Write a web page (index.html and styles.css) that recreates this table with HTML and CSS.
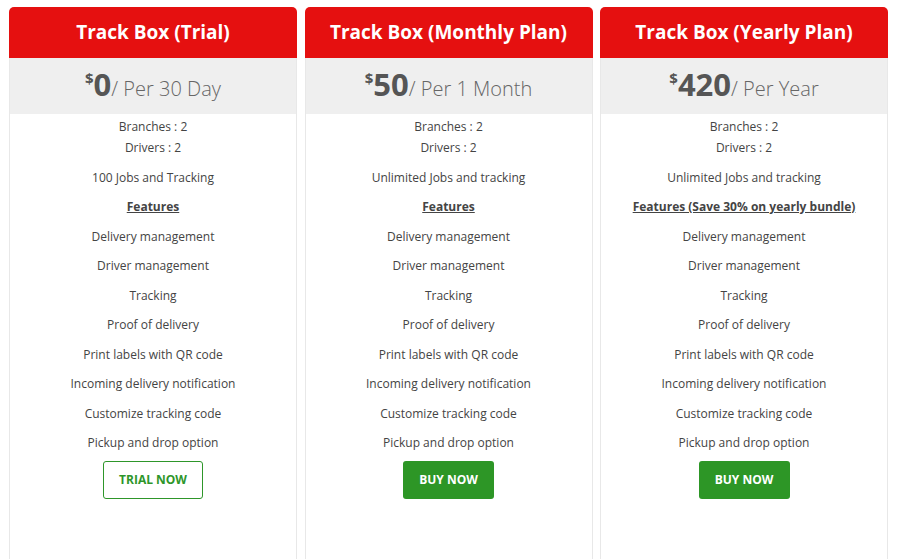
FILE: index.html
```
<!DOCTYPE html>
<html>
<head>
<meta charset="utf-8">
<link rel="stylesheet" href="styles.css">
</head>
<body>
<div class="plans">
  <div class="card">
    <div class="head">Track Box (Trial)</div>
    <div class="price"><sup>$</sup><span class="amt">0</span><span class="per">/ Per 30 Day</span></div>
    <div class="body">
      <p class="first">Branches : 2<br>Drivers : 2</p>
      <p>100 Jobs and Tracking</p>
      <p class="feat">Features</p>
      <p>Delivery management</p>
      <p>Driver management</p>
      <p>Tracking</p>
      <p>Proof of delivery</p>
      <p>Print labels with QR code</p>
      <p>Incoming delivery notification</p>
      <p>Customize tracking code</p>
      <p>Pickup and drop option</p>
      <a class="btn outline">TRIAL NOW</a>
    </div>
  </div>
  <div class="card">
    <div class="head">Track Box (Monthly Plan)</div>
    <div class="price"><sup>$</sup><span class="amt">50</span><span class="per">/ Per 1 Month</span></div>
    <div class="body">
      <p class="first">Branches : 2<br>Drivers : 2</p>
      <p>Unlimited Jobs and tracking</p>
      <p class="feat">Features</p>
      <p>Delivery management</p>
      <p>Driver management</p>
      <p>Tracking</p>
      <p>Proof of delivery</p>
      <p>Print labels with QR code</p>
      <p>Incoming delivery notification</p>
      <p>Customize tracking code</p>
      <p>Pickup and drop option</p>
      <a class="btn solid">BUY NOW</a>
    </div>
  </div>
  <div class="card">
    <div class="head">Track Box (Yearly Plan)</div>
    <div class="price"><sup>$</sup><span class="amt">420</span><span class="per">/ Per Year</span></div>
    <div class="body">
      <p class="first">Branches : 2<br>Drivers : 2</p>
      <p>Unlimited Jobs and tracking</p>
      <p class="feat">Features (Save 30% on yearly bundle)</p>
      <p>Delivery management</p>
      <p>Driver management</p>
      <p>Tracking</p>
      <p>Proof of delivery</p>
      <p>Print labels with QR code</p>
      <p>Incoming delivery notification</p>
      <p>Customize tracking code</p>
      <p>Pickup and drop option</p>
      <a class="btn solid">BUY NOW</a>
    </div>
  </div>
</div>
</body>
</html>
```
FILE: styles.css
```
html, body {
  margin: 0;
  padding: 0;
  background: #ffffff;
  overflow: hidden;
}
body {
  font-family: "Open Sans", "Liberation Sans", sans-serif;
  color: #444;
}
.plans {
  display: flex;
  gap: 7.5px;
  padding: 7px 9px 0 9px;
}
.card {
  width: 288px;
  flex: none;
  display: flex;
  flex-direction: column;
  height: 600px;
}
.head {
  background: #e51010;
  color: #fff;
  font-weight: 700;
  font-size: 19px;
  height: 51px;
  line-height: 51px;
  text-align: center;
  border-radius: 5px 5px 0 0;
}
.price {
  background: #efefef;
  height: 56px;
  text-align: center;
  color: #555;
  line-height: 52px;
  border-left: 1px solid #e8e8e8;
  border-right: 1px solid #e8e8e8;
}
.price sup {
  font-size: 15px;
  font-weight: 700;
  vertical-align: 0;
  position: relative;
  top: -12px;
}
.price .amt {
  font-size: 31px;
  font-weight: 700;
}
.price .per {
  font-size: 20px;
  font-weight: 300;
  color: #666;
}
.body {
  flex: 1;
  border: 1px solid #e8e8e8;
  border-top: none;
  text-align: center;
  font-size: 12px;
  padding-top: 2px;
}
.body p {
  margin: 8.5px 0 0 0;
  line-height: 21px;
}
.body p.first {
  margin-top: 0;
}
.body p.feat {
  font-weight: 700;
  text-decoration: underline;
}
.btn {
  display: inline-block;
  margin-top: 8px;
  height: 38px;
  line-height: 38px;
  box-sizing: border-box;
  border-radius: 3px;
  font-size: 12px;
  font-weight: 700;
}
.btn.outline {
  width: 100px;
  border: 1px solid #2e962a;
  color: #2e962a;
  line-height: 36px;
}
.btn.solid {
  width: 91px;
  background: #2d9626;
  color: #fff;
}
```
